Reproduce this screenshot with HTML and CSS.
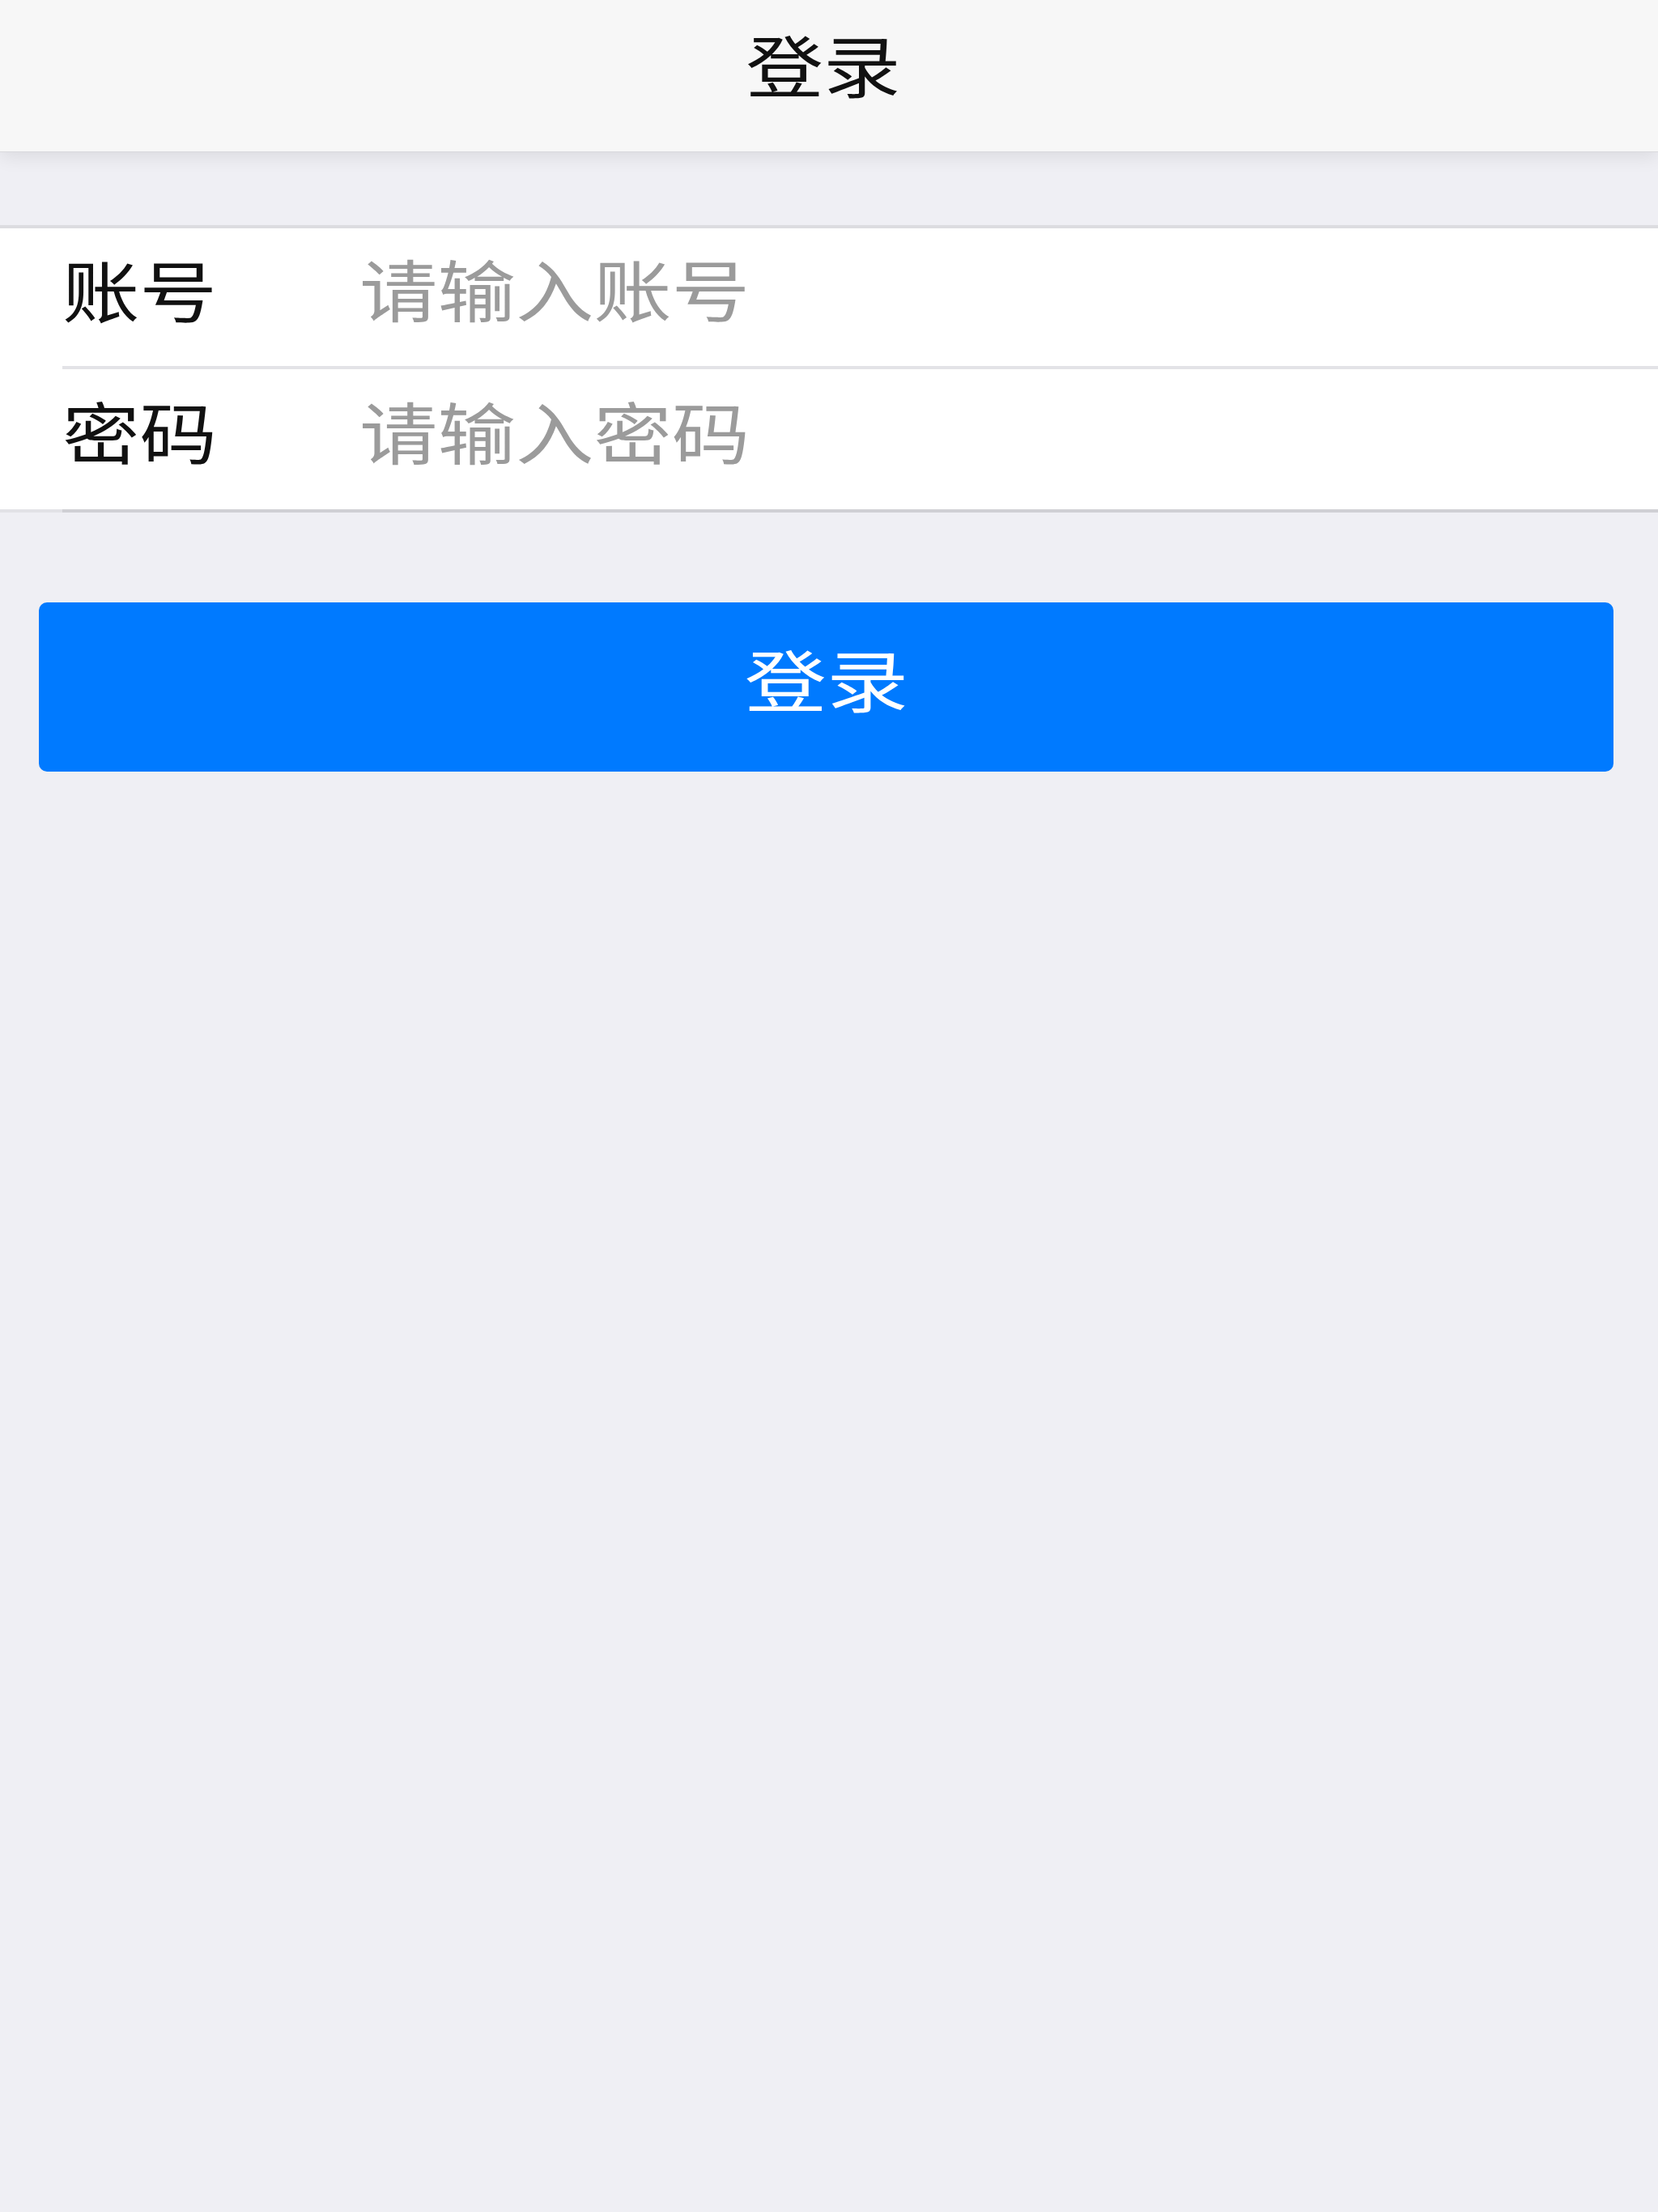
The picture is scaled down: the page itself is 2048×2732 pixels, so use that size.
FILE: index.html
```html
<!DOCTYPE html>
<html lang="zh-CN">
<head>
<meta charset="utf-8">
<title>登录</title>
<link rel="stylesheet" href="styles.css">
</head>
<body>
<header class="navbar">
  <h1 class="navbar-title"><span class="stretch">登录</span></h1>
</header>
<main class="content">
  <form class="form-group">
    <div class="form-row">
      <div class="form-row-inner">
        <label class="form-label" for="account"><span class="stretch">账号</span></label>
        <input class="form-input" id="account" type="text" placeholder="请输入账号">
      </div>
    </div>
    <div class="form-row form-row-last">
      <div class="form-row-inner">
        <label class="form-label" for="password"><span class="stretch">密码</span></label>
        <input class="form-input" id="password" type="password" placeholder="请输入密码">
      </div>
    </div>
  </form>
  <button class="login-button" type="button"><span class="stretch">登录</span></button>
</main>
</body>
</html>
```
FILE: styles.css
```css
html, body {
  margin: 0;
  padding: 0;
}

body {
  background: #efeff4;
  font-family: "Noto Sans CJK SC", "Noto Sans", sans-serif;
  color: #111;
  min-height: 2732px;
}

.stretch {
  display: inline-block;
  transform: scaleX(1.15);
}

.navbar {
  position: relative;
  z-index: 2;
  height: 187px;
  box-sizing: border-box;
  padding: 0 14px 30px 0;
  background: #f7f7f7;
  display: flex;
  align-items: center;
  justify-content: center;
  box-shadow: 0 1px 0 #d9d9dd, 0 6px 22px rgba(0, 0, 0, 0.09);
}

.navbar-title {
  margin: 0;
  font-size: 83px;
  font-weight: 400;
  line-height: 1;
  color: #111;
}

.navbar-title .stretch {
  transform-origin: center;
}

.content {
  display: flex;
  flex-direction: column;
}

.form-group {
  margin: 91px 0 0;
  background: #fff;
  border-top: 4px solid #dcdce0;
  border-bottom: 4px solid #e2e2e6;
}

.form-row {
  padding-left: 77px;
}

.form-row-inner {
  height: 170px;
  display: flex;
  align-items: center;
  border-bottom: 4px solid #e3e3e7;
}

.form-row-last .form-row-inner {
  height: 173px;
  margin-bottom: -4px;
  border-bottom: 4px solid #cfcfd4;
  position: relative;
}

.form-label {
  width: 367px;
  flex: none;
  font-size: 83px;
  line-height: 1;
  color: #111;
  padding-bottom: 22px;
}

.form-label .stretch {
  transform-origin: left center;
}

.form-input {
  flex: none;
  width: 1360px;
  border: 0;
  outline: none;
  background: transparent;
  padding: 0 0 22px;
  margin: 0;
  font-family: inherit;
  font-size: 83px;
  line-height: 1.2;
  color: #111;
  transform: scaleX(1.162);
  transform-origin: left center;
}

.form-input::placeholder {
  color: #9b9b9b;
}

.login-button {
  margin: 111px 55px 0 48px;
  height: 209px;
  border: 0;
  border-radius: 10px;
  background: #007aff;
  color: #fff;
  font-family: inherit;
  font-size: 83px;
  line-height: 1;
  padding: 0 0 22px;
  cursor: pointer;
}

.login-button .stretch {
  transform: scaleX(1.22);
  transform-origin: center;
}
```
